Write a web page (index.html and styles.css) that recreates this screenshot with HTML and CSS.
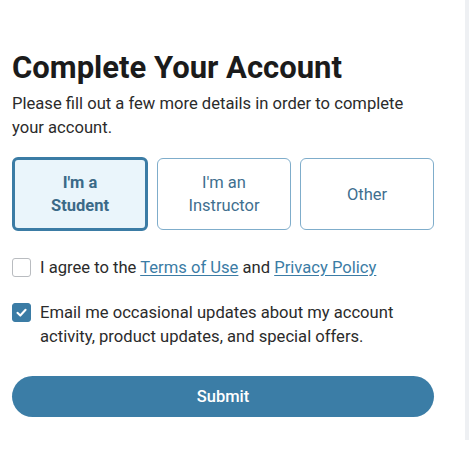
FILE: index.html
```html
<!DOCTYPE html>
<html>
<head>
<meta charset="utf-8">
<link rel="stylesheet" href="styles.css">
</head>
<body>
<div class="page">
  <main class="form">
    <h1 class="title">Complete Your Account</h1>
    <p class="lead">Please fill out a few more details in order to complete your account.</p>
    <div class="roles">
      <button class="role role-active">I'm a<br>Student</button>
      <button class="role">I'm an<br>Instructor</button>
      <button class="role">Other</button>
    </div>
    <label class="check">
      <span class="box"></span>
      <span class="check-text">I agree to the <a href="#">Terms of Use</a> and <a href="#">Privacy Policy</a></span>
    </label>
    <label class="check check-second">
      <span class="box box-on"><svg viewBox="0 0 20 20" width="20" height="20"><path d="M5.2 10.4 L8.6 13.6 L14.8 6.8" fill="none" stroke="#fff" stroke-width="2.4" stroke-linecap="round" stroke-linejoin="round"/></svg></span>
      <span class="check-text">Email me occasional updates about my account activity, product updates, and special offers.</span>
    </label>
    <button class="submit">Submit</button>
  </main>
  <div class="scrollbar"></div>
</div>
</body>
</html>
```
FILE: styles.css
```css
* { box-sizing: border-box; }
html, body { margin: 0; padding: 0; background: #fff; }
body { font-family: Roboto, "Noto Sans", sans-serif; color: #2b2b2b; }
.page { display: flex; width: 472px; height: 462px; }
.form { width: 422px; margin-left: 12px; padding-top: 48px; display: flex; flex-direction: column; }
.title { margin: 0; font-size: 31px; font-weight: 700; color: #1b1b1b; line-height: 40px; letter-spacing: 0; }
.lead { margin: 4px 0 0; font-size: 16.6px; line-height: 24px; color: #2b2b2b; padding-right: 10px; }
.roles { display: grid; grid-template-columns: 136px 134px 134px; gap: 9px; margin-top: 18px; }
.role { height: 72px; border: 1.5px solid #7fadcb; border-radius: 6px; background: #fff; font-family: inherit; font-size: 16.5px; line-height: 23px; color: #3f6f8f; padding: 0; }
.role-active { border: 3px solid #3b7ca5; background: #eaf5fb; font-weight: 700; color: #3b6a88; height: 74px; margin-top: -1px; }
.check { display: flex; align-items: flex-start; gap: 9px; margin-top: 25px; font-size: 16.6px; line-height: 24px; color: #2b2b2b; }
.check-second { margin-top: 21px; }
.box { flex: none; width: 19px; height: 19px; border: 1.5px solid #b9bcc0; border-radius: 3px; margin-top: 2px; display: flex; align-items: center; justify-content: center; }
.box-on { background: #3b7ca5; border-color: #3b7ca5; }
.box-on svg { width: 17px; height: 17px; }
.check-text a { color: #3b7ca5; text-decoration: underline; text-underline-offset: 2px; }
.submit { margin-top: 27px; height: 41px; border: none; border-radius: 21px; background: #3b7da6; color: #fff; font-family: inherit; font-size: 16.5px; font-weight: 500; }
.scrollbar { margin-left: 31px; width: 4px; height: 440px; background: #eef0f3; }
```
